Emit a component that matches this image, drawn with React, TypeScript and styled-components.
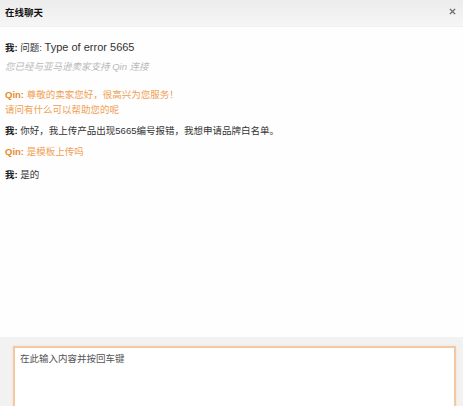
import styled, { createGlobalStyle } from "styled-components";

const GlobalStyle = createGlobalStyle`
  html, body { margin: 0; padding: 0; background: #ffffff; }
  body { font-family: "Liberation Sans", "Noto Sans CJK SC", sans-serif; }
  * { box-sizing: border-box; }
`;

const Window = styled.div`
  width: 463px;
  height: 406px;
  display: flex;
  flex-direction: column;
  background: #fefefe;
  overflow: hidden;
`;

const Header = styled.div`
  height: 27px;
  flex-shrink: 0;
  display: flex;
  align-items: center;
  justify-content: space-between;
  padding: 0 7px 3px 5px;
  background: linear-gradient(#ececec, #f6f6f6);
  border-bottom: 1px solid #f0f0f0;
`;

const Title = styled.div`
  font-size: 9.5px;
  font-weight: bold;
  color: #111;
`;

const Close = styled.button`
  border: 0;
  background: none;
  padding: 0;
  width: 8px;
  height: 8px;
  display: flex;
  align-items: center;
  justify-content: center;
  cursor: pointer;
`;

const Messages = styled.div`
  flex: 1;
  padding: 12px 5px 0;
  font-size: 9.5px;
`;

const Line = styled.div<{ $top?: number; $lh?: number }>`
  margin-top: ${(p) => p.$top ?? 0}px;
  line-height: ${(p) => p.$lh ?? 16}px;
  color: #333;
`;

const Latin = styled.span`
  font-size: 11px;
`;

const Me = styled.b`
  color: #1a1a1a;
`;

const Qin = styled.b`
  color: #e98a2c;
`;

const QinText = styled.span`
  color: #f0a052;
`;

const Note = styled.div`
  margin-top: 3px;
  line-height: 16px;
  color: #b8b8b8;
  font-style: italic;
`;

const Footer = styled.div`
  height: 69px;
  flex-shrink: 0;
  background: #f2f2f2;
  padding: 9px 7px 0 13px;
  display: flex;
`;

const Input = styled.textarea`
  flex: 1;
  height: 70px;
  resize: none;
  border: 2px solid #f2c9a2;
  box-shadow: 0 0 2px #f8dcc0;
  background: #ffffff;
  padding: 4px 5px;
  font-family: "Liberation Sans", "Noto Sans CJK SC", sans-serif;
  font-size: 9.5px;
  line-height: 14px;
  outline: none;
  &::placeholder { color: #555; }
`;

export default function App() {
  return (
    <>
      <GlobalStyle />
      <Window>
        <Header>
          <Title>在线聊天</Title>
          <Close aria-label="关闭">
            <svg width="7" height="7" viewBox="0 0 8 8">
              <path d="M1 1L7 7M7 1L1 7" stroke="#666" strokeWidth="1.6" />
            </svg>
          </Close>
        </Header>
        <Messages>
          <Line>
            <Me>我:</Me> 问题: <Latin>Type of error 5665</Latin>
          </Line>
          <Note>您已经与亚马逊卖家支持 Qin 连接</Note>
          <Line $top={12} $lh={15}>
            <Qin>Qin:</Qin> <QinText>尊敬的卖家您好，很高兴为您服务！</QinText>
            <br />
            <QinText>请问有什么可以帮助您的呢</QinText>
          </Line>
          <Line $top={6}>
            <Me>我:</Me> 你好，我上传产品出现5665编号报错，我想申请品牌白名单。
          </Line>
          <Line $top={5}>
            <Qin>Qin:</Qin> <QinText>是模板上传吗</QinText>
          </Line>
          <Line $top={7}>
            <Me>我:</Me> 是的
          </Line>
        </Messages>
        <Footer>
          <Input placeholder="在此输入内容并按回车键" />
        </Footer>
      </Window>
    </>
  );
}
